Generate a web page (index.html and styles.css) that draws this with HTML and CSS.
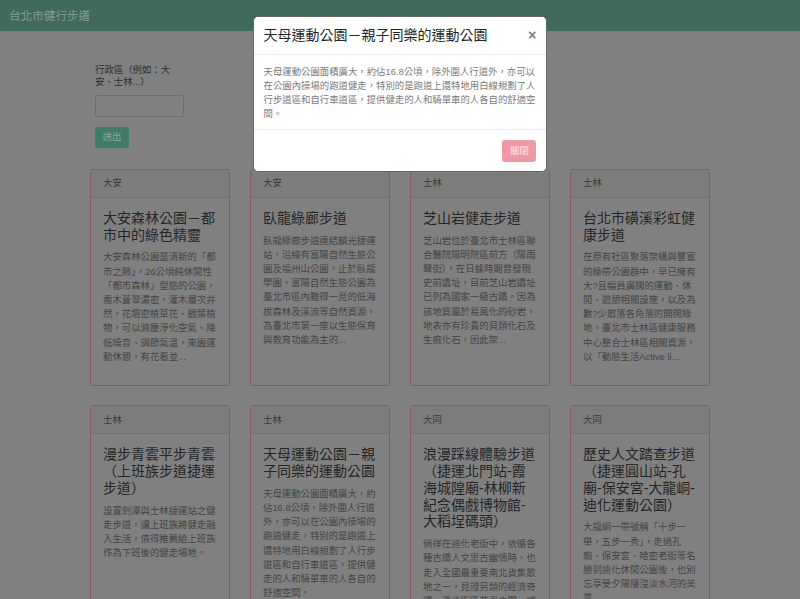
FILE: index.html
```html
<!DOCTYPE html>
<html lang="zh-Hant">
<head>
<meta charset="utf-8">
<title>台北市健行步道</title>
<link rel="stylesheet" href="styles.css?r=9">
</head>
<body class="modal-open">
<nav class="navbar"><span class="brand">台北市健行步道</span></nav>
<main class="page">
  <form class="search">
    <label class="search-label" for="district">行政區（例如：大安、士林...）</label>
    <input class="search-input" id="district" type="text">
    <button class="btn-submit" type="button">送出</button>
  </form>
  <section class="cards">
    <article class="card">
      <div class="card-header">大安</div>
      <div class="card-body">
        <h4 class="card-title">大安森林公園－都市中的綠色精靈</h4>
        <p class="card-text">大安森林公園是清新的「都市之肺」，26公頃純休閒性「都市森林」型態的公園，喬木蒼翠濃密，灌木層次井然，花壇密植草花、觀葉植物，可以滌塵淨化空氣、降低噪音、調節氣溫，來園運動休憩，有花看並...</p>
      </div>
    </article>
    <article class="card">
      <div class="card-header">大安</div>
      <div class="card-body">
        <h4 class="card-title">臥龍綠廊步道</h4>
        <p class="card-text">臥龍綠廊步道連結麟光捷運站，沿線有富陽自然生態公園及福州山公園，止於臥龍學園。富陽自然生態公園為臺北市區內難得一見的低海拔森林及溪流等自然資源，為臺北市第一座以生態保育與教育功能為主的...</p>
      </div>
    </article>
    <article class="card">
      <div class="card-header">士林</div>
      <div class="card-body">
        <h4 class="card-title">芝山岩健走步道</h4>
        <p class="card-text">芝山岩位於臺北市士林區聯合醫院陽明院區前方（陽雨聲街），在日據時期曾發現史前遺址，目前芝山岩遺址已列為國家一級古蹟。因為該地質屬於易風化的砂岩，地表亦有珍貴的貝類化石及生痕化石，因此架...</p>
      </div>
    </article>
    <article class="card">
      <div class="card-header">士林</div>
      <div class="card-body">
        <h4 class="card-title">台北市磺溪彩虹健康步道</h4>
        <p class="card-text">在原有社區聚落架構與豐富的綠帶公園群中，早已擁有大?且幅員廣闊的運動、休閒、遊憩相關設施，以及為數?少散落各角落的開闊綠地。臺北市士林區健康服務中心整合士林區相關資源，以「動態生活Active li...</p>
      </div>
    </article>
    <article class="card">
      <div class="card-header">士林</div>
      <div class="card-body">
        <h4 class="card-title">漫步青雲平步青雲（上班族步道捷運步道）</h4>
        <p class="card-text">設置劍潭與士林捷運站之健走步道，讓上班族將健走融入生活，值得推薦給上班族作為下班後的健走場地。</p>
      </div>
    </article>
    <article class="card">
      <div class="card-header">士林</div>
      <div class="card-body">
        <h4 class="card-title">天母運動公園－親子同樂的運動公園</h4>
        <p class="card-text">天母運動公園面積廣大，約佔16.8公頃，除外圍人行道外，亦可以在公園內操場的跑道健走，特別的是跑道上還特地用白線規劃了人行步道區和自行車道區，提供健走的人和騎單車的人各自的舒適空間。</p>
      </div>
    </article>
    <article class="card">
      <div class="card-header">大同</div>
      <div class="card-body">
        <h4 class="card-title">浪漫踩線體驗步道（捷運北門站-霞海城隍廟-林柳新紀念偶戲博物館-大稻埕碼頭）</h4>
        <p class="card-text">徜徉在迪化老街中，依循各種古蹟人文思古幽情時，也走入全國最重要南北貨集散地之一，見證另類的經濟奇蹟。漫步街區巷弄之間，感受老城的風華...</p>
      </div>
    </article>
    <article class="card">
      <div class="card-header">大同</div>
      <div class="card-body">
        <h4 class="card-title">歷史人文踏查步道（捷運圓山站-孔廟-保安宮-大龍峒-迪化運動公園）</h4>
        <p class="card-text">大龍峒一帶號稱「十步一舉，五步一秀」，走過孔廟、保安宮、哈密老街等名勝到迪化休閒公園後，也別忘享受夕陽隱沒淡水河的美景...</p>
      </div>
    </article>
  </section>
</main>
<div class="dialog-layer">
  <div class="dialog-box">
    <div class="dialog-head">
      <h5 class="dialog-title">天母運動公園－親子同樂的運動公園</h5>
      <button class="dialog-x" type="button" aria-label="Close">×</button>
    </div>
    <div class="dialog-body">
      <p class="dialog-text">天母運動公園面積廣大，約佔16.8公頃，除外圍人行道外，亦可以在公園內操場的跑道健走，特別的是跑道上還特地用白線規劃了人行步道區和自行車道區，提供健走的人和騎單車的人各自的舒適空間。</p>
    </div>
    <div class="dialog-foot">
      <button class="dialog-btn" type="button">關閉</button>
    </div>
  </div>
</div>
</body>
</html>
```
FILE: styles.css
```css
/* Page colours are the tones seen through the modal's dark backdrop */
* { box-sizing: border-box; }
html, body { margin: 0; padding: 0; }
html { background: #808080; }
body {
  font-family: "Liberation Sans", "Noto Sans CJK TC", sans-serif;
  font-size: 9.4px;
  line-height: 14.2px;
  color: #121416;
  background: #808080;
  overflow: hidden;
  height: 599px;
  position: relative;
}
.navbar {
  height: 31px;
  background: #3f6a5c;
  display: flex;
  align-items: center;
  padding: 0 9px;
}
.brand {
  font-size: 11.6px;
  line-height: 18px;
  color: #8a9c96;
}
.page {
  width: 620px;
  margin: 0 auto;
}
.search {
  padding: 33px 0 0 5px;
  display: flex;
  flex-direction: column;
  align-items: flex-start;
}
.search-label {
  width: 82px;
  line-height: 12px;
  color: #2e2e2e;
  margin-bottom: 7px;
}
.search-input {
  width: 89px;
  height: 21.6px;
  border: 1px solid #6a6d70;
  background: #808080;
  border-radius: 2.5px;
  margin: 0 0 10px;
  padding: 0 6px;
  font: inherit;
}
.btn-submit {
  width: 34px;
  height: 21.6px;
  border: 1px solid #3f7d69;
  background: #3f7d69;
  color: #8fa79f;
  border-radius: 2.5px;
  font: inherit;
  padding: 0;
}
.cards {
  margin-top: 20.4px;
  display: grid;
  grid-template-columns: repeat(4, 140px);
  column-gap: 20px;
  row-gap: 19px;
}
.card {
  border: 1px solid #8c5a5a;
  border-radius: 3px;
  background: #808080;
  display: flex;
  flex-direction: column;
  overflow: hidden;
}
.card-header {
  padding: 6.5px 12px;
  background: #7c7c7c;
  border-bottom: 1px solid #707070;
  color: #3a3a3a;
}
.card-body {
  padding: 12px;
}
.card-title {
  margin: 0 0 7px;
  font-size: 14px;
  line-height: 16.8px;
  font-weight: 400;
  color: #262626;
}
.card-text {
  margin: 0 0 9px;
  color: #444;
}
.dialog-layer {
  position: absolute;
  top: 0;
  left: 0;
  right: 0;
  display: flex;
  justify-content: center;
  padding-top: 16px;
}
.dialog-box {
  width: 294px;
  background: #fff;
  border: 1px solid #666;
  border-radius: 5px;
}
.dialog-head {
  display: flex;
  justify-content: space-between;
  align-items: flex-start;
  padding: 9px 9.6px;
  border-bottom: 1px solid #e9ecef;
}
.dialog-title {
  margin: 0;
  font-size: 14px;
  line-height: 19px;
  font-weight: 400;
  color: #212529;
}
.dialog-x {
  border: 0;
  background: transparent;
  padding: 0;
  font-family: "Liberation Sans", sans-serif;
  font-size: 14.4px;
  line-height: 19px;
  font-weight: 700;
  color: #7f7f7f;
}
.dialog-body {
  padding: 9.6px 9px 8px 9.6px;
}
.dialog-text {
  margin: 0;
  color: #7a7a7a;
}
.dialog-foot {
  display: flex;
  justify-content: flex-end;
  padding: 9.6px;
  border-top: 1px solid #e9ecef;
}
.dialog-btn {
  height: 21.6px;
  padding: 0 6.6px;
  border: 1px solid #ef9aa2;
  background: #ef9aa2;
  color: #fde9eb;
  border-radius: 2.5px;
  font: inherit;
}
```
